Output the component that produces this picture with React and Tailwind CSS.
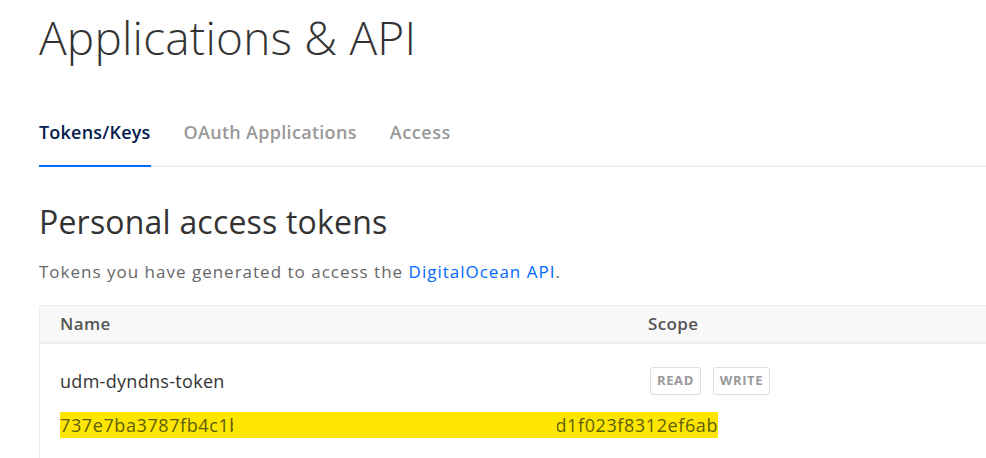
export default function App() {
  return (
    <div className="w-[986px] h-[458px] overflow-hidden bg-white" style={{ fontFamily: "'Open Sans', sans-serif" }}>
      <div className="pl-[39px]">
        <h1 className="text-[46px] font-light text-[#333] leading-none pt-[14px] tracking-[0.2px]">Applications &amp; API</h1>
        <div className="mt-[60px] flex border-b-2 border-[#f0f0f0]">
          <div className="pb-[21px] border-b-2 border-[#0069ff] -mb-[2px] text-[18px] font-semibold text-[#031b4e] leading-[24px] tracking-[0.2px]">Tokens/Keys</div>
          <div className="ml-[33px] text-[18px] font-semibold text-[#999] leading-[24px] tracking-[0.3px]">OAuth Applications</div>
          <div className="ml-[33px] text-[18px] font-semibold text-[#999] leading-[24px] tracking-[0.6px]">Access</div>
        </div>
        <h2 className="mt-[39px] text-[32px] font-normal text-[#333] leading-none tracking-[0.2px]">Personal access tokens</h2>
        <p className="mt-[25px] text-[17px] text-[#676767] leading-none tracking-[1px]">
          Tokens you have generated to access the <span className="text-[#0069ff]">DigitalOcean API</span>.
        </p>
        <div className="mt-[25px] border border-b-0 border-r-0 border-[#eee] rounded-tl-[4px]">
          <div className="flex h-[38px] items-center bg-[#f9f9f9] border-b-[3px] border-[#efefef] text-[17px] font-semibold text-[#555] tracking-[0.4px]">
            <div className="pl-[20px] w-[608px]">Name</div>
            <div>Scope</div>
          </div>
          <div className="pl-[20px] pt-[23px] pb-[30px]">
            <div className="flex items-center">
              <div className="w-[590px] text-[18px] text-[#333] tracking-[0.3px]">udm-dyndns-token</div>
              <div className="flex gap-[12px]">
                <span className="border border-[#ddd] rounded-[3px] px-[6px] h-[28px] flex items-center text-[13px] font-bold text-[#999] tracking-[0.6px]">READ</span>
                <span className="border border-[#ddd] rounded-[3px] px-[6px] h-[28px] flex items-center text-[13px] font-bold text-[#999] tracking-[0.6px]">WRITE</span>
              </div>
            </div>
            <div className="mt-[17px] flex w-[658px] h-[26px] bg-[#ffe600] items-center text-[18px] text-[#5e5e0c] tracking-[0.6px]">
              <div className="w-[173px] overflow-hidden whitespace-nowrap">737e7ba3787fb4c1b</div>
              <div className="flex-1" />
              <div className="w-[161px] overflow-hidden whitespace-nowrap flex justify-end">fd1f023f8312ef6ab</div>
            </div>
          </div>
        </div>
      </div>
    </div>
  );
}
